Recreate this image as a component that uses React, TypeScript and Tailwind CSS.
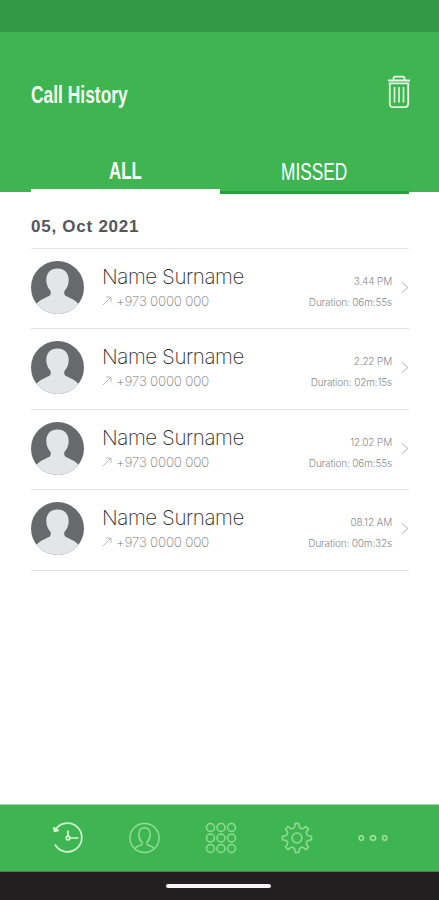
const calls = [
  { id: 1, name: "Name Surname", phone: "+973 0000 000", time: "3.44 PM", duration: "06m:55s" },
  { id: 2, name: "Name Surname", phone: "+973 0000 000", time: "2.22 PM", duration: "02m:15s" },
  { id: 3, name: "Name Surname", phone: "+973 0000 000", time: "12.02 PM", duration: "06m:55s" },
  { id: 4, name: "Name Surname", phone: "+973 0000 000", time: "08.12 AM", duration: "00m:32s" },
];

function TrashIcon() {
  return (
    <svg width="24" height="34" viewBox="0 0 24 34" fill="none" stroke="#e4f8e5" strokeWidth="1.8">
      <path d="M1 5.500h22M6.500 5V3.400Q6.500 1.700 8.200 1.700h7.600q1.700 0 1.700 1.700V5" />
      <path d="M2.800 8.300h18.400v20.500q0 3.300-3.300 3.300H6.100q-3.300 0-3.300-3.300z" />
      <path d="M7.500 12v15.500M12 12v15.500M16.500 12v15.500" strokeWidth="1.6" />
    </svg>
  );
}

function Avatar() {
  return (
    <svg className="shrink-0 rounded-full" width="53" height="53" viewBox="0 0 53 53">
      <rect width="53" height="53" fill="#67696c" />
      <path
        d="M26.500 7.500C33.500 7.500 37.700 12 37.700 18.800C37.700 23.500 36.300 26.500 33.800 29.500C32.800 31 33 33.500 34.500 34.700C38.500 36.800 44 38.500 48 43.500V53H5V43.500C9 38.500 14.500 36.800 18.500 34.700C20 33.500 20.200 31 19.200 29.500C16.700 26.500 15.300 23.500 15.300 18.800C15.300 12 19.500 7.500 26.500 7.500z"
        fill="#e3e5e8"
      />
    </svg>
  );
}

function HistoryIcon() {
  return (
    <svg width="32" height="32" viewBox="0 0 32 32" fill="none" stroke="#d5f5d8" strokeWidth="1.700">
      <path d="M3.200 8.200A14.300 14.300 0 1 1 3 22.500" />
      <path d="M1.800 5.800 2.600 9.300 6.200 8.500z" fill="#d5f5d8" strokeLinejoin="round" />
      <circle cx="16" cy="16" r="1.800" />
      <path d="M16 14V8.500M18 16h8.500" />
    </svg>
  );
}

function ContactIcon() {
  return (
    <svg width="32" height="32" viewBox="0 0 32 32" fill="none" stroke="#91dc98" strokeWidth="1.500">
      <circle cx="16.500" cy="16" r="14.600" />
      <path d="M6.800 26.500c1.500-1.700 4.200-2.800 6.200-3.500 1.500-.6 1.700-1.900.8-3-2-2-3-4.700-3-7.300 0-4.200 2.200-7 5.700-7s5.700 2.800 5.700 7c0 2.600-1 5.300-3 7.300-.9 1.100-.7 2.400.8 3 2 .7 4.700 1.800 6.200 3.500" />
    </svg>
  );
}

function KeypadIcon() {
  const steps = [5.5, 16, 26.5];
  return (
    <svg width="32" height="32" viewBox="0 0 32 32" fill="none" stroke="#91dc98" strokeWidth="1.500">
      {steps.map((y) => steps.map((x) => <circle key={`${x}-${y}`} cx={x} cy={y} r="4" />))}
    </svg>
  );
}

function SettingsIcon() {
  return (
    <svg width="32" height="32" viewBox="0 0 32 32" fill="none" stroke="#91dc98" strokeWidth="1.500" strokeLinejoin="round">
      <circle cx="16" cy="16" r="4.900" />
      {[0, 45, 90, 135, 180, 225, 270, 315].map((angle) => (
        <path
          key={angle}
          transform={`rotate(${angle} 16 16)`}
          d="M12.060 6.480Q13.500 5.880 13.800 4.200L14.200 1.500H17.800L18.200 4.200Q18.500 5.880 19.940 6.480"
        />
      ))}
    </svg>
  );
}

function MoreIcon() {
  return (
    <svg width="32" height="32" viewBox="0 0 32 32" fill="none" stroke="#a4e2a9" strokeWidth="1.400">
      <circle cx="4.300" cy="16" r="2.200" />
      <ellipse cx="16" cy="16" rx="2.700" ry="2.200" />
      <circle cx="27.700" cy="16" r="2.200" />
    </svg>
  );
}

export default function App() {
  return (
    <div className="flex h-[900px] w-[439px] flex-col overflow-hidden bg-white font-['Liberation_Sans',sans-serif]">
      <div className="h-8 shrink-0 bg-[#349944]" />

      <header className="flex h-40 shrink-0 flex-col bg-[#3fb551] font-['Liberation_Sans_Narrow','Liberation_Sans',sans-serif]">
        <div className="flex h-[120px] items-center justify-between pr-[28px] pl-[31px]">
          <h1 className="mt-[7px] origin-left scale-x-[0.757] text-[23px] leading-none font-bold whitespace-nowrap text-[#f5fff4]">Call History</h1>
          <TrashIcon />
        </div>
        <div className="mx-[31px] flex h-10 text-[23px] leading-none text-white">
          <button className="h-10 w-[189px] shrink-0 border-b-3 border-white pt-[2px] font-bold">
            <span className="inline-block scale-x-[0.73]">ALL</span>
          </button>
          <button className="h-[42px] w-[189px] shrink-0 border-b-3 border-[#22a33b] pt-px">
            <span className="inline-block scale-x-[0.75]">MISSED</span>
          </button>
        </div>
      </header>

      <main className="flex-1 pr-[30px] pl-[31px]">
        <h2 className="flex h-[56.5px] items-center border-b border-[#e4e4e4] pt-[13px] text-[17px] font-bold tracking-[0.75px] text-[#55565a]">
          05, Oct 2021
        </h2>
        {calls.map((call) => (
          <div key={call.id} className="flex h-[80.5px] items-start border-b-[1.5px] border-[#e0e0e0] pt-3">
            <Avatar />
            <div className="ml-[18px] flex-1 font-['Inter',sans-serif] font-extralight">
              <p className="mt-[3px] text-[20.5px] leading-[26px] tracking-[-0.4px] whitespace-nowrap text-[#2c2c2e]">{call.name}</p>
              <div className="mt-px flex items-center gap-1 text-[#77777a]">
                <svg width="10" height="10" viewBox="0 0 10 10" fill="none" stroke="#a8a8aa" strokeWidth="0.8">
                  <path d="M1 9 9 1M4 1h5v5" />
                </svg>
                <span className="text-[13.5px] leading-5 tracking-[-0.25px] whitespace-nowrap">{call.phone}</span>
              </div>
            </div>
            <div className="mt-[10px] text-right font-['Inter',sans-serif] text-[10px] leading-[21px] font-light tracking-[-0.15px] whitespace-nowrap text-[#8a8a8c]">
              <p>{call.time}</p>
              <p>Duration: {call.duration}</p>
            </div>
            <svg className="mt-5 ml-[9px]" width="8" height="13" viewBox="0 0 8 13" fill="none" stroke="#b0b0b2">
              <path d="M1 1.500 7 6.500 1 11.500" />
            </svg>
          </div>
        ))}
      </main>

      <nav className="flex h-[67px] shrink-0 items-center justify-between border-t border-[#9bdca3] bg-[#3fb551] pr-[50px] pl-[52px]">
        <HistoryIcon />
        <ContactIcon />
        <KeypadIcon />
        <SettingsIcon />
        <MoreIcon />
      </nav>
      <div className="flex h-[29px] shrink-0 items-center justify-center border-t border-[#55795a] bg-[#231f20] pr-0.5">
        <div className="h-1 w-[105px] rounded-full bg-[#fcf3f8]" />
      </div>
    </div>
  );
}
